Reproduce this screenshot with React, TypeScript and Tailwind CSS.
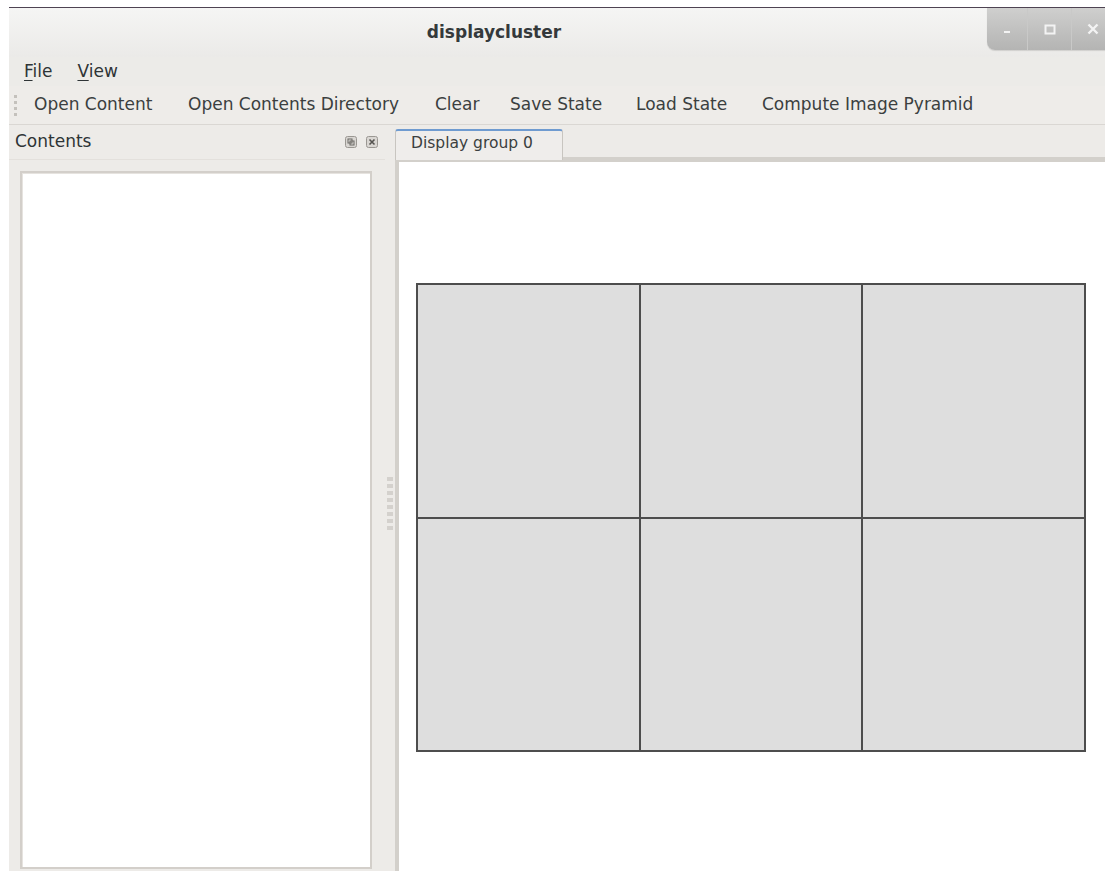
import React from 'react';

const toolbarItems = [
  { label: 'Open Content', w: 'w-[154px]' },
  { label: 'Open Contents Directory', w: 'w-[247px]' },
  { label: 'Clear', w: 'w-[75px]' },
  { label: 'Save State', w: 'w-[126px]' },
  { label: 'Load State', w: 'w-[126px]' },
  { label: 'Compute Image Pyramid', w: 'w-[230px]' },
];

// little dock buttons (float / close)
const DockButton: React.FC<{ kind: 'float' | 'close' }> = ({ kind }) => (
  <svg width="12" height="12" viewBox="0 0 12 12">
    <rect x="0.5" y="0.5" width="11" height="11" rx="2" fill="#d9d6d2" stroke="#9a9792" />
    {kind === 'float' ? (
      <>
        <rect x="3" y="3" width="4" height="4" fill="none" stroke="#6a6864" />
        <rect x="5" y="5" width="4" height="4" fill="none" stroke="#6a6864" />
      </>
    ) : (
      <path d="M3.5 3.5 L8.5 8.5 M8.5 3.5 L3.5 8.5" stroke="#555350" strokeWidth="1.6" />
    )}
  </svg>
);

const App: React.FC = () => {
  return (
    <div className="w-[1105px] h-[871px] bg-white overflow-hidden font-['DejaVu_Sans',sans-serif] text-[#2e3436]">
      <div className="pt-[7px] pl-[9px] h-full">
        <div className="h-full w-[1120px] flex flex-col border-t border-[#4e4352] bg-[#edebe8]">
          {/* title bar */}
          <div className="h-[49px] flex items-start bg-gradient-to-b from-[#f5f5f4] to-[#ebeae8]">
            <div className="flex-1 h-full flex items-center justify-center">
              <span className="text-[17px] font-bold text-[#34393b] pr-[8px]">displaycluster</span>
            </div>
            <div className="w-[142px] h-[42px] flex rounded-bl-[8px] overflow-hidden bg-gradient-to-b from-[#cfcfce] to-[#b4b4b3] shadow-[0_1px_1px_rgba(0,0,0,0.12)]">
              <div className="w-[41px] h-full flex items-center justify-center border-r border-[#c9c9c8]">
                <svg width="10" height="10" viewBox="0 0 10 10">
                  <rect x="2" y="7" width="6" height="2" fill="#f3f3f3" />
                </svg>
              </div>
              <div className="w-[44px] h-full flex items-center justify-center border-r border-[#c9c9c8]">
                <svg width="12" height="12" viewBox="0 0 12 12">
                  <rect x="1.5" y="2.5" width="9" height="8" fill="none" stroke="#f3f3f3" strokeWidth="2" />
                </svg>
              </div>
              <div className="w-[57px] h-full flex items-center pl-[15px]">
                <svg width="12" height="12" viewBox="0 0 12 12">
                  <path d="M1.5 1.5 L10.5 10.5 M10.5 1.5 L1.5 10.5" stroke="#f3f3f3" strokeWidth="2.4" />
                </svg>
              </div>
            </div>
          </div>

          {/* menu bar */}
          <div className="h-[29px] flex items-center gap-[25px] pl-[15px] text-[17px] bg-[#ecebe8]">
            <span><span className="underline underline-offset-[3px]">F</span>ile</span>
            <span><span className="underline underline-offset-[3px]">V</span>iew</span>
          </div>

          {/* toolbar */}
          <div className="h-[39px] flex items-center border-b border-[#dad7d3] bg-[#eeece9]">
            <div className="w-[25px] h-full flex items-center pl-[5px]">
              <div className="flex flex-col gap-[3px]">
                <div className="w-[3px] h-[3px] bg-[#c4c1bc]" />
                <div className="w-[3px] h-[3px] bg-[#c4c1bc]" />
                <div className="w-[3px] h-[3px] bg-[#c4c1bc]" />
                <div className="w-[3px] h-[3px] bg-[#c4c1bc]" />
              </div>
            </div>
            {toolbarItems.map((t) => (
              <span key={t.label} className={`${t.w} shrink-0 text-[17px] text-[#3b3f40] whitespace-nowrap`}>
                {t.label}
              </span>
            ))}
          </div>

          {/* body */}
          <div className="flex-1 flex min-h-0">
            {/* Contents dock */}
            <div className="w-[376px] shrink-0 flex flex-col">
              <div className="h-[35px] flex items-center justify-between pl-[6px] pr-[7px] border-b border-[#e3e0dc]">
                <span className="text-[17px]">Contents</span>
                <div className="flex gap-[9px]">
                  <DockButton kind="float" />
                  <DockButton kind="close" />
                </div>
              </div>
              <div className="flex-1 pt-[11px] pl-[11px] pr-[13px] pb-[2px]">
                <div className="h-full bg-white border-2 border-[#d3cfca] shadow-[inset_1px_1px_0_#e6e3df]" />
              </div>
            </div>

            {/* splitter */}
            <div className="w-[10px] shrink-0 flex items-center justify-center">
              <div className="flex flex-col gap-[3px] mt-[10px]">
                {[0, 1, 2, 3, 4, 5, 6, 7].map((i) => (
                  <div key={i} className="w-[6px] h-[4px] bg-[#d4d1cd]" />
                ))}
              </div>
            </div>

            {/* tab widget */}
            <div className="flex-1 flex flex-col min-w-0">
              <div className="h-[35px] flex items-end border-b-[3px] border-[#d3d0cb]">
                <div className="w-[168px] h-[31px] flex items-center pl-[15px] bg-[#efedeb] rounded-t-[3px] border-t-2 border-l border-r border-t-[#6f9bd0] border-l-[#c8c5c0] border-r-[#c8c5c0] -mb-[3px] pb-[3px] text-[15.5px] text-[#3b3f40]">
                  Display group 0
                </div>
              </div>
              <div className="flex-1 bg-white border-l-4 border-t-2 border-[#d3d0cb] pl-[17px] pt-[121px]">
                {/* 3 x 2 wall of screens */}
                <div className="w-[670px] h-[469px] grid grid-cols-3 grid-rows-2 gap-[2px] bg-[#4d4d4d] border-2 border-[#4d4d4d]">
                  <div className="bg-[#dedede]" />
                  <div className="bg-[#dedede]" />
                  <div className="bg-[#dedede]" />
                  <div className="bg-[#dedede]" />
                  <div className="bg-[#dedede]" />
                  <div className="bg-[#dedede]" />
                </div>
              </div>
            </div>
          </div>
        </div>
      </div>
    </div>
  );
};

export default App;
